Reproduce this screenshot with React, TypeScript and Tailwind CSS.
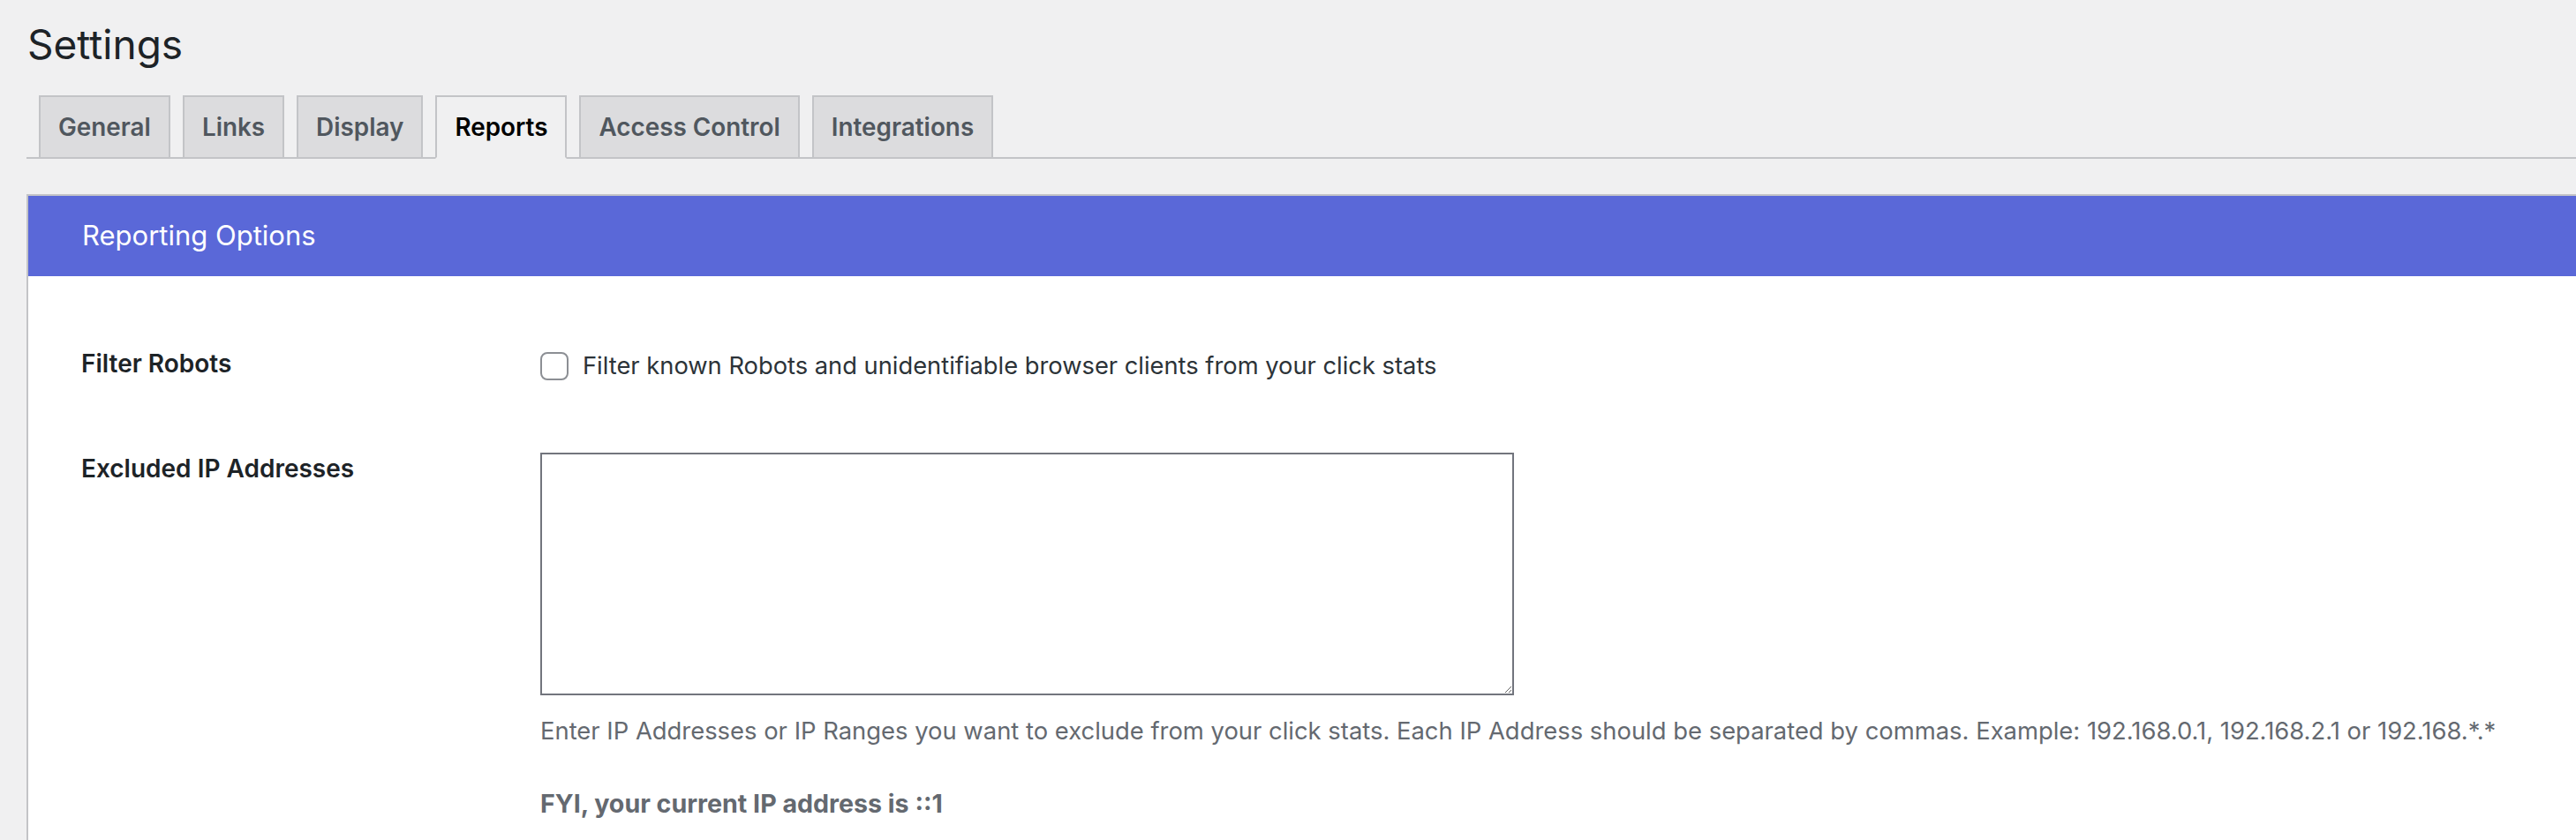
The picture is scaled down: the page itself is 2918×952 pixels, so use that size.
import { useState } from "react"

const tabs = ["General", "Links", "Display", "Reports", "Access Control", "Integrations"]

export default function App() {
    const [active, setActive] = useState("Reports")
    const [filterRobots, setFilterRobots] = useState(false)

    return (
        <div className="min-h-screen w-full overflow-hidden bg-[#f0f0f1] font-['Inter',sans-serif] text-[#3c434a]">
            <div className="pl-[30px]">
                <h1 className="pt-[20px] pl-[1px] text-[46px] leading-[60px] font-normal text-[#1d2327]">Settings</h1>

                {/* tab strip */}
                <nav className="mt-[28px] flex gap-[14px] border-b-2 border-[#c3c4c7] pl-[14px]">
                    {tabs.map((tab) => (
                        <button
                            key={tab}
                            onClick={() => setActive(tab)}
                            className={
                                tab === active
                                    ? "-mb-[2px] border-2 border-[#c3c4c7] border-b-[#f0f0f1] bg-[#f0f0f1] px-[20px] py-[10px] text-[27.85px] leading-[48px] font-semibold text-black"
                                    : "-mb-[2px] border-2 border-[#c3c4c7] bg-[#dcdcde] px-[20px] py-[10px] text-[27.85px] leading-[48px] font-semibold text-[#50575e]"
                            }
                        >
                            {tab}
                        </button>
                    ))}
                </nav>

                {/* settings panel, runs past the right edge */}
                <section className="mt-[40px] -mr-[40px] border-t-2 border-l-2 border-[#c3c4c7] bg-white">
                    <div className="flex h-[91px] items-center bg-[#5a68d8] pl-[61px]">
                        <h2 className="text-[31px] font-normal text-white">Reporting Options</h2>
                    </div>

                    <div className="pl-[60px] pb-[80px]">
                        <div className="flex pt-[81px]">
                            <div className="w-[520px] shrink-0 text-[28px] leading-[36px] font-semibold text-[#1d2327]">Filter Robots</div>
                            <label className="flex items-center gap-[16px] pt-[3px] text-[27.3px] leading-[36px] text-[#2c3338]">
                                <input
                                    type="checkbox"
                                    checked={filterRobots}
                                    onChange={(e) => setFilterRobots(e.target.checked)}
                                    className="h-[32px] w-[32px] appearance-none rounded-[8px] border-2 border-[#8c8f94] bg-white checked:bg-[#5a68d8]"
                                />
                                Filter known Robots and unidentifiable browser clients from your click stats
                            </label>
                        </div>

                        <div className="mt-[80px] flex">
                            <div className="w-[520px] shrink-0 text-[28px] leading-[36px] font-semibold text-[#1d2327]">Excluded IP Addresses</div>
                            <div>
                                <textarea className="block h-[275px] w-[1103px] border-2 border-[#72757d] bg-white" />
                                <p className="mt-[22px] text-[27.4px] leading-[36px] text-[#646970]">
                                    Enter IP Addresses or IP Ranges you want to exclude from your click stats. Each IP Address should be separated by commas. Example: 192.168.0.1, 192.168.2.1 or 192.168.*.*
                                </p>
                                <p className="mt-[47px] text-[28.6px] leading-[36px] font-bold text-[#646970]">FYI, your current IP address is ::1</p>
                            </div>
                        </div>
                    </div>
                </section>
            </div>
        </div>
    )
}
